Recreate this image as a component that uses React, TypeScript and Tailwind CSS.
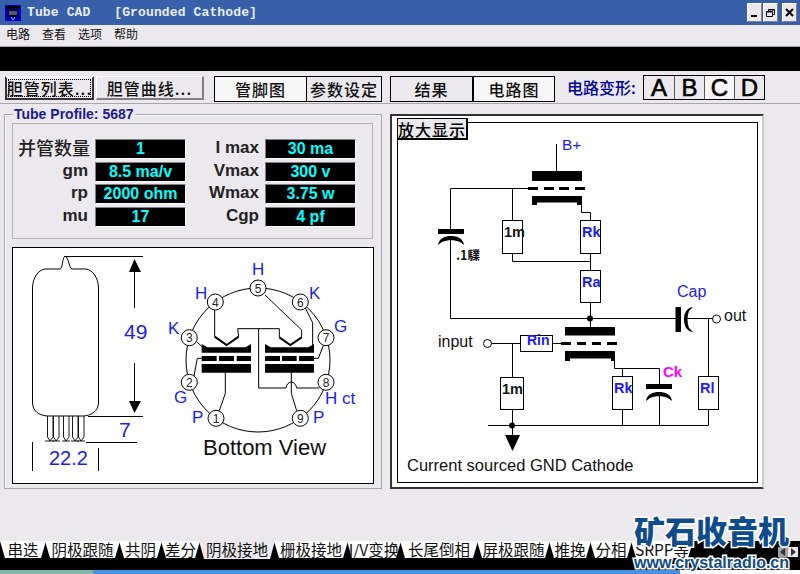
const CJK = "font-['Noto_Sans_CJK_SC',sans-serif]";
const raised = "border border-t-white border-l-white border-r-[#808080] border-b-[#808080]";

const BLUE = "#1a1aff";

const params = [
  ["并管数量", "1", "I max", "30 ma"],
  ["gm", "8.5 ma/v", "Vmax", "300 v"],
  ["rp", "2000 ohm", "Wmax", "3.75 w"],
  ["mu", "17", "Cgp", "4 pf"],
];

const tabs = [
  { label: "串迭", w: "w-[46px]" },
  { label: "阴极跟随", w: "w-[75px]" },
  { label: "共阴", w: "w-[43px]" },
  { label: "差分", w: "w-[39px]" },
  { label: "阴极接地", w: "w-[76px]", active: true },
  { label: "栅极接地", w: "w-[74px]" },
  { label: "I/V变换", w: "w-[54px]" },
  { label: "长尾倒相", w: "w-[78px]" },
  { label: "屏极跟随", w: "w-[73px]" },
  { label: "推挽", w: "w-[42px]" },
  { label: "分相", w: "w-[42px]" },
  { label: "SRPP等", w: "w-[62px]" },
];

const pins: [string, number, number][] = [
  ["5", 258, 288],
  ["4", 215.3, 302],
  ["6", 300.3, 302],
  ["3", 189.3, 337.7],
  ["7", 326, 337.7],
  ["2", 189.3, 382.3],
  ["8", 326, 382.3],
  ["1", 216, 418.3],
  ["9", 300.3, 418.3],
];

function AppIcon() {
  return (
    <svg width="16" height="16" viewBox="0 0 16 16" className="shrink-0">
      <rect width="16" height="16" fill="#0000c0" />
      <rect x="1" y="1" width="14" height="3" fill="#000" />
      <rect x="3" y="5" width="10" height="7" fill="#000" />
      <path d="M4 7h8M4 9h8M6 12l2 3 2-3" stroke="#9aa8ff" fill="none" />
    </svg>
  );
}

function WinButton({ kind }: { kind: "min" | "max" | "close" }) {
  return (
    <div className={`w-[15px] h-[19px] bg-[#ebe9ed] flex items-center justify-center ${raised}`}>
      <svg width="11" height="11" viewBox="0 0 11 11">
        {kind === "min" && <rect x="2" y="8" width="6" height="2" fill="#000" />}
        {kind === "max" && (
          <path d="M3.5 2.5h6v5h-2M3.5 2.5v2M1.5 4.5h6v5h-6zM1.5 5h6M3.5 3h6" stroke="#000" fill="none" />
        )}
        {kind === "close" && <path d="M2 2l7 7M9 2l-7 7" stroke="#000" strokeWidth="2" />}
      </svg>
    </div>
  );
}

function ToolButton({ label, className }: { label: string; className: string }) {
  return (
    <div className={`h-[24px] flex items-center justify-center text-[16px] tracking-[1px] font-medium text-[#111] whitespace-nowrap ${CJK} ${className}`}>
      {label}
    </div>
  );
}

function ValueCell({ value }: { value: string }) {
  return (
    <div className="h-[20px] bg-black border border-t-[#808080] border-l-[#808080] border-r-white border-b-white flex items-center justify-center text-[#00ffff] text-[16px] font-bold leading-none">
      {value}
    </div>
  );
}

function TubeDrawing() {
  return (
    <svg viewBox="13 248 360 235" className="w-[360px] h-[235px] font-['Liberation_Sans',sans-serif]">
      {/* tube outline */}
      <path
        d="M65 256C62 258 63 268 60 269H45C38 270 33 278 32.500 287V403C33 411 38 415 47 416H84C92 415 98 411 98.500 403V287C98 278 93 270 86 269H72C69 268 69 258 65 256Z"
        fill="none"
        stroke="#000"
      />
      <path
        d="M47.500 416V437L50 441L53 437V416M53.500 416V437L56 441L59 437V416M63.500 416V437L66 441L69 437V416M72.500 416V437L75 441L78 437V416M78.500 416V437L81 441L84 437V416M45 441H54M52 441H60M62 441H70M71 441H79M77 441H85"
        fill="none"
        stroke="#000"
        strokeWidth="0.9"
      />
      <path
        d="M65 256.500H143M88 416.500H143M86 442.500H137M134.500 270V308M134.500 363V403M32.500 442V471M98.500 448V471"
        fill="none"
        stroke="#000"
      />
      <path d="M134.500 259L141 272H129ZM134.500 413L141 401H129Z" fill="#000" />
      <text x="124" y="339" fontSize="21" fill={BLUE}>49</text>
      <text x="119" y="437" fontSize="21" fill={BLUE}>7</text>
      <text x="49" y="465" fontSize="20" fill={BLUE}>22.2</text>

      {/* socket ring */}
      <circle cx="258" cy="360" r="72" fill="none" stroke="#000" />

      {/* wiring, coordinates taken at 3x */}
      <g transform="translate(180 250) scale(0.3333)" fill="none" stroke="#000" strokeWidth="3">
        <path d="M104 175V260M176 260L173 236H298V262M365 262V240L255 135" />
        <path d="M104 260L140 285L176 260M298 262L331 285L365 262" strokeWidth="6" />
        <path d="M236 236V414H318C322 390 346 390 350 414H418" />
        <path d="M375 172L398 218V285M50 275L66 290M430 287L415 325H402M42 378L52 325H65" />
        <path d="M118 482L136 430V368M350 482L334 430V368" />
        <path
          d="M65 282L82 292H197L213 282V308H65ZM255 282L272 292H385L402 282V308H255Z"
          fill="#000"
          stroke="none"
        />
        <path
          d="M65 318h45v15h-45zM117 318h45v15h-45zM170 318h43v15h-43zM255 318h45v15h-45zM306 318h44v15h-44zM357 318h45v15h-45zM65 342h148v26h-148zM255 342h147v26h-147z"
          fill="#000"
          stroke="none"
        />
      </g>

      {pins.map(([n, x, y]) => (
        <g key={n}>
          <circle cx={x} cy={y} r="8" fill="#fff" stroke="#000" />
          <text x={x} y={y + 4.500} fontSize="12" textAnchor="middle" fill="#222">{n}</text>
        </g>
      ))}

      <g fontSize="17" fill={BLUE}>
        <text x="252" y="275">H</text>
        <text x="195" y="299">H</text>
        <text x="309" y="299">K</text>
        <text x="168" y="334">K</text>
        <text x="334" y="332">G</text>
        <text x="174" y="403">G</text>
        <text x="192" y="423">P</text>
        <text x="313" y="423">P</text>
        <text x="325" y="404">H ct</text>
      </g>
      <text x="203" y="455" fontSize="22" fill="#111">Bottom View</text>
    </svg>
  );
}

function Resistor({ x, y, w, h, label, color = BLUE }: { x: number; y: number; w: number; h: number; label: string; color?: string }) {
  return (
    <g>
      <rect x={x + 0.5} y={y + 0.5} width={w} height={h} fill="#fff" stroke="#000" />
      <text x={x + 2} y={y + 17} fontSize="14.500" fontWeight="bold" fill={color}>{label}</text>
    </g>
  );
}

function CircuitDrawing() {
  return (
    <svg viewBox="397 123 359 359" className="w-[359px] h-[359px] font-['Liberation_Sans',sans-serif]">
      <g fill="none" stroke="#000">
        <path d="M555.500 144V171M449.500 229V188.500H527M511.500 188.500V220M511.500 253V261.500H589.500M580.500 205V212.500H589.500V220M589.500 253V270M589.500 302V327" />
        <path d="M449.500 240V318.500H675M686 318.500H711M707.500 318.500V376M707.500 409V425.500M487 425.500H707.500" />
        <path d="M491 343.500H519M551 343.500H560M511.500 343.500V377M511.500 409V435" />
        <path d="M613.500 359V368.500H658.500V385M621.500 368.500V376M621.500 409V425.500M658.500 395V425.500" />
      </g>

      {/* upper tube */}
      <g fill="#000">
        <rect x="531" y="171" width="50" height="10" />
        <path d="M527 187h10v3h-10zM543 187h10v3h-10zM558 187h10v3h-10zM574 187h10v3h-10z" />
        <path d="M531 196H581V205H576V202.500H536V205H531Z" />
        {/* lower tube */}
        <rect x="564" y="327" width="50" height="8.500" />
        <path d="M560 342h10v3h-10zM576 342h9v3h-9zM591 342h9v3h-9zM606 342h10v3h-10z" />
        <path d="M564 351H614V361H610V358.500H569V361H564Z" />
        {/* capacitors */}
        <rect x="437" y="229" width="26" height="5" />
        <path d="M437 245C438 238 444 236 450 236C456 236 462 238 463 245L459 242C454 239.500 446 239.500 441 242Z" />
        <rect x="645" y="384" width="26" height="5" />
        <path d="M645 401C646 394 652 392 658 392C664 392 670 394 671 401L667 398C662 395.500 654 395.500 649 398Z" />
        <rect x="674.500" y="307" width="5.500" height="25" />
        <path d="M692 307C685 308 683 314 683 319.500C683 325 685 331 692 332L688 328C686 323 686 316 688 311Z" />
        <circle cx="589" cy="318.500" r="3" />
        <circle cx="511" cy="425.500" r="3" />
        <path d="M504 435H519L511.500 451Z" />
      </g>

      <circle cx="486.500" cy="343.500" r="4" fill="#fff" stroke="#000" />
      <circle cx="715.500" cy="319" r="4" fill="#fff" stroke="#000" />

      <Resistor x={501} y={220} w={20} h={33} label="1m" color="#111" />
      <Resistor x={579} y={220} w={20} h={33} label="Rk" />
      <Resistor x={579} y={270} w={20} h={32} label="Ra" />
      <Resistor x={519} y={335} w={32} h={16} label="" />
      <Resistor x={499} y={377} w={23} h={32} label="1m" color="#111" />
      <Resistor x={611} y={376} w={20} h={33} label="Rk" />
      <Resistor x={697} y={376} w={20} h={33} label="Rl" />

      <text x="526" y="345" fontSize="14" fontWeight="bold" fill={BLUE}>Rin</text>
      <text x="561" y="150" fontSize="15.500" fontWeight="500" fill={BLUE}>B+</text>
      <text x="676" y="297" fontSize="16" fill={BLUE}>Cap</text>
      <text x="662" y="377" fontSize="15" fontWeight="bold" fill="#ff00ff">Ck</text>
      <text x="723" y="321" fontSize="16" fill="#111">out</text>
      <text x="437" y="347" fontSize="16" fill="#111">input</text>
      <text x="455" y="260" fontSize="12.500" fontWeight="bold" fill="#111" className={CJK}>.1驜</text>
      <text x="406" y="471" fontSize="16.500" fill="#111">Current sourced GND Cathode</text>
    </svg>
  );
}

export default function App() {
  return (
    <div className="relative w-[800px] h-[574px] overflow-hidden bg-[#ebe9ed] flex flex-col font-['Liberation_Sans',sans-serif] text-black">
      {/* title bar */}
      <div className="h-[25px] shrink-0 bg-[#3760a9] flex items-center pl-[5px] pr-[3px]">
        <AppIcon />
        <span className="ml-[6px] font-['Liberation_Mono',monospace] font-bold text-[13px] tracking-[0.13px] text-[#e8edf5] whitespace-pre">
          {"Tube CAD   [Grounded Cathode]"}
        </span>
        <div className="ml-auto flex items-center gap-[1px]">
          <WinButton kind="min" />
          <WinButton kind="max" />
          <div className="w-[2px]" />
          <WinButton kind="close" />
        </div>
      </div>

      {/* menu */}
      <div className={`h-[21px] shrink-0 flex items-center gap-[12px] pl-[6px] pb-[3px] text-[12px] text-[#111] ${CJK}`}>
        <span>电路</span>
        <span>查看</span>
        <span>选项</span>
        <span>帮助</span>
      </div>

      <div className="h-[25px] shrink-0 bg-black border-t border-[#a0a0a0]" />

      {/* toolbar */}
      <div className="h-[33px] shrink-0 border-b border-[#a8a8a8] flex items-start pt-[5px] pl-[5px]">
        <ToolButton label="胆管列表..." className="w-[89px] border-2 border-t-[#fff] border-l-[#333] border-r-[#333] border-b-[#333] outline-1 outline-dotted -outline-offset-4 outline-black" />
        <ToolButton label="胆管曲线..." className={`ml-[2px] w-[108px] ${raised} border-r-2 border-b-2`} />
        <div className="ml-[10px] flex border border-black">
          <ToolButton label="管脚图" className="w-[91px] h-[22px] bg-[#f6f6f6]" />
          <ToolButton label="参数设定" className="w-[75px] h-[22px] border-l border-black" />
        </div>
        <div className="ml-[8px] flex border border-black">
          <ToolButton label="结果" className="w-[81px] h-[22px]" />
          <ToolButton label="电路图" className="w-[82px] h-[22px] bg-[#f6f6f6] border-l-2 border-black" />
        </div>
        <div className={`ml-[12px] w-[76px] h-[22px] flex items-center text-[16px] font-medium text-[#000099] whitespace-nowrap ${CJK}`}>
          电路变形:
        </div>
        <div className="flex border border-black -mt-[1px] h-[25px]">
          {["A", "B", "C", "D"].map((l, i) => (
            <div
              key={l}
              className={`w-[30px] flex items-center justify-center text-[24px] [-webkit-text-stroke:0.6px_#000] ${i > 0 ? "border-l border-[#555]" : ""} ${l === "C" ? "bg-[#f6f6f6]" : ""}`}
            >
              {l}
            </div>
          ))}
        </div>
      </div>

      {/* main */}
      <div className="flex-1 min-h-0 flex items-start pl-[4px] pt-[10px]">
        <div className="relative w-[378px] h-[375px] border border-[#a8a8a8] shadow-[inset_1px_1px_0_#fff] pl-[7px] pt-[8px]">
          <div className="absolute -top-[8px] left-[8px] bg-[#ebe9ed] px-[1px] text-[14px] font-bold text-[#1b1b8f] leading-[15px] whitespace-nowrap">
            Tube Profile: 5687
          </div>
          <div className="w-[361px] h-[116px] border border-[#b4b4b4] pt-[15px]">
            <div className="grid grid-cols-[82px_91px_79px_91px] gap-y-[2.600px] items-center">
              {params.map(([a, av, b, bv]) => (
                <div key={a} className="contents">
                  <div className={`text-right leading-none text-[#222] whitespace-nowrap ${a === "并管数量" ? `${CJK} pr-[5px] text-[18px] font-medium -mt-[4px]` : "pr-[7px] text-[17px] font-bold -mt-[3px]"}`}>{a}</div>
                  <ValueCell value={av} />
                  <div className="pr-[6px] text-right text-[17px] font-bold leading-none text-[#222] -mt-[3px]">{b}</div>
                  <ValueCell value={bv} />
                </div>
              ))}
            </div>
          </div>
          <div className="mt-[8px] w-[362px] h-[237px] bg-white border border-black">
            <TubeDrawing />
          </div>
        </div>

        <div className="ml-[8px] w-[374px] h-[375px] bg-white border-2 border-t-[#333] border-l-[#333] border-r-[#c8c8c8] border-b-[#333] pl-[5px] pt-[6px]">
          <div className="relative w-[361px] h-[361px] border border-black">
            <div className={`absolute -top-[5px] -left-[1px] w-[71px] h-[22px] bg-[#ebe9ed] border border-black border-r-2 border-b-2 flex items-center justify-center text-[16px] tracking-[1px] font-medium whitespace-nowrap ${CJK}`}>
              放大显示
            </div>
            <CircuitDrawing />
          </div>
        </div>
      </div>

      {/* tab strip */}
      <div className="h-[29px] shrink-0 bg-black flex items-start">
        {tabs.map((t) => (
          <div
            key={t.label}
            className={`${t.w} -mr-[1px] h-[17px] flex items-center justify-center text-[15.500px] text-[#111] whitespace-nowrap [clip-path:polygon(0_0,100%_0,calc(100%-5px)_100%,5px_100%)] ${CJK} ${t.active ? "bg-[#ebe9ed] h-[18px]" : "bg-white"}`}
          >
            {t.label}
          </div>
        ))}
      </div>

      <div className="h-[4px] shrink-0 flex">
        <div className="w-[93px] bg-[#7fb8a8]" />
        <div className="w-[587px] bg-[#4a90e0]" />
        <div className="flex-1 bg-white" />
      </div>

      {/* scroll arrows under the watermark */}
      <div className="absolute left-[778px] top-[547px] flex">
        <svg width="20" height="10" viewBox="0 0 20 10">
          <rect width="10" height="10" fill="#a0a0a0" />
          <rect x="10" width="10" height="10" fill="#ebe9ed" />
          <path d="M2 5L7 1V9ZM18 5L13 1V9Z" fill="#333" />
        </svg>
      </div>

      {/* site watermark */}
      <div className={`absolute left-[634px] top-[511px] text-[31px] leading-[38px] font-black text-[#0f4c8c] whitespace-nowrap [-webkit-text-stroke:3px_#fff] [paint-order:stroke_fill] ${CJK}`}>
        矿石收音机
      </div>
      <div className="absolute left-[634px] top-[553px] text-[16px] leading-[20px] font-bold text-[#0f4c8c] whitespace-nowrap [-webkit-text-stroke:3px_#fff] [paint-order:stroke_fill]">
        www.crystalradio.cn
      </div>
    </div>
  );
}
